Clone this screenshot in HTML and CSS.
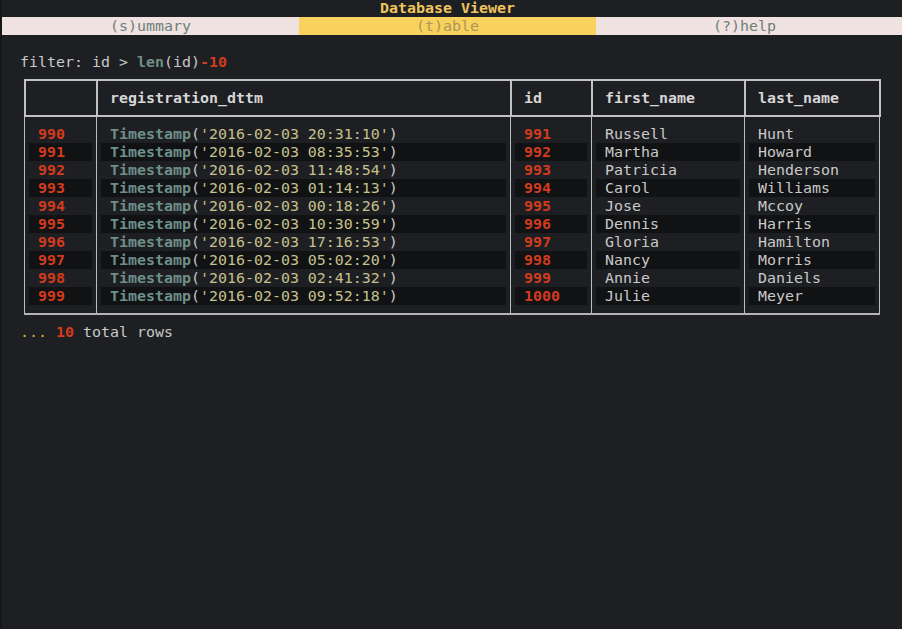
FILE: index.html
```html
<!DOCTYPE html>
<html lang="en">
<head>
<meta charset="utf-8">
<title>Database Viewer</title>
<link rel="stylesheet" href="styles.css">
</head>
<body>
<div class="screen">
  <div class="line title">Database Viewer</div>
  <div class="tabs">
    <div class="tab">(s)ummary</div>
    <div class="tab active">(t)able</div>
    <div class="tab help">(?)help</div>
  </div>
  <div class="line"></div>
  <div class="line filter">filter: id &gt; <b class="fn">len</b>(id)<b class="num">-10</b></div>

  <div class="table">
    <div class="thead">
      <div class="th idx"></div>
      <div class="th reg">registration_dttm</div>
      <div class="th id">id</div>
      <div class="th first">first_name</div>
      <div class="th last">last_name</div>
    </div>
    <div class="tbody">
      <div class="tr pad"><div class="td idx"></div><div class="td reg"></div><div class="td id"></div><div class="td first"></div><div class="td last"></div></div>
      <div class="tr"><div class="td idx num">990</div><div class="td reg"><b class="fn">Timestamp</b>(<span class="str">'2016-02-03 20:31:10'</span>)</div><div class="td id num">991</div><div class="td first">Russell</div><div class="td last">Hunt</div></div>
      <div class="tr alt"><div class="td idx num">991</div><div class="td reg"><b class="fn">Timestamp</b>(<span class="str">'2016-02-03 08:35:53'</span>)</div><div class="td id num">992</div><div class="td first">Martha</div><div class="td last">Howard</div></div>
      <div class="tr"><div class="td idx num">992</div><div class="td reg"><b class="fn">Timestamp</b>(<span class="str">'2016-02-03 11:48:54'</span>)</div><div class="td id num">993</div><div class="td first">Patricia</div><div class="td last">Henderson</div></div>
      <div class="tr alt"><div class="td idx num">993</div><div class="td reg"><b class="fn">Timestamp</b>(<span class="str">'2016-02-03 01:14:13'</span>)</div><div class="td id num">994</div><div class="td first">Carol</div><div class="td last">Williams</div></div>
      <div class="tr"><div class="td idx num">994</div><div class="td reg"><b class="fn">Timestamp</b>(<span class="str">'2016-02-03 00:18:26'</span>)</div><div class="td id num">995</div><div class="td first">Jose</div><div class="td last">Mccoy</div></div>
      <div class="tr alt"><div class="td idx num">995</div><div class="td reg"><b class="fn">Timestamp</b>(<span class="str">'2016-02-03 10:30:59'</span>)</div><div class="td id num">996</div><div class="td first">Dennis</div><div class="td last">Harris</div></div>
      <div class="tr"><div class="td idx num">996</div><div class="td reg"><b class="fn">Timestamp</b>(<span class="str">'2016-02-03 17:16:53'</span>)</div><div class="td id num">997</div><div class="td first">Gloria</div><div class="td last">Hamilton</div></div>
      <div class="tr alt"><div class="td idx num">997</div><div class="td reg"><b class="fn">Timestamp</b>(<span class="str">'2016-02-03 05:02:20'</span>)</div><div class="td id num">998</div><div class="td first">Nancy</div><div class="td last">Morris</div></div>
      <div class="tr"><div class="td idx num">998</div><div class="td reg"><b class="fn">Timestamp</b>(<span class="str">'2016-02-03 02:41:32'</span>)</div><div class="td id num">999</div><div class="td first">Annie</div><div class="td last">Daniels</div></div>
      <div class="tr alt"><div class="td idx num">999</div><div class="td reg"><b class="fn">Timestamp</b>(<span class="str">'2016-02-03 09:52:18'</span>)</div><div class="td id num">1000</div><div class="td first">Julie</div><div class="td last">Meyer</div></div>
      <div class="tr pad"><div class="td idx"></div><div class="td reg"></div><div class="td id"></div><div class="td first"></div><div class="td last"></div></div>
    </div>
  </div>

  <div class="line footer"><span class="dots">...</span> <b class="num">10</b> total rows</div>
</div>
</body>
</html>
```

FILE: styles.css
```css
html, body {
  margin: 0;
  padding: 0;
}

body {
  background: #1e1f22;
  border-left: 2px solid #161719;
  height: 629px;
  overflow: hidden;
  font-family: "DejaVu Sans Mono", monospace;
  font-size: 14.95px;
  line-height: 18px;
  color: #c9c9c9;
}

.screen {
  width: 900px;
  margin-top: -1px;
}

.line {
  height: 18px;
  white-space: pre;
}

.title {
  text-align: center;
  padding-right: 9px;
  font-weight: bold;
  color: #f0c45c;
}

.tabs {
  display: flex;
  height: 18px;
}

.tab {
  width: 297px;
  text-align: center;
  background: #f0e2e1;
  color: #6b8079;
}

.tab.active {
  background: #f9d15d;
  color: #a8975c;
}

.tab.help {
  width: 306px;
  padding-right: 9px;
  box-sizing: border-box;
}

.filter {
  padding-left: 18px;
}

.fn {
  color: #6e8f88;
  font-weight: bold;
}

.num {
  color: #d23b1d;
  font-weight: bold;
}

.str {
  color: #c6c18d;
}

/* table */
.table {
  margin-left: 22px;
  padding-top: 8px;
  width: 857px;
}

.thead {
  display: flex;
  border: 2px solid #c2c2c2;
  border-right: 0;
  height: 34px;
}

.th {
  border-right: 2px solid #c2c2c2;
  padding: 8px 0 0 12px;
  box-sizing: border-box;
  font-weight: bold;
  color: #d6d6d6;
  white-space: pre;
}

.th.idx { width: 72px; }
.th.reg { width: 414px; }
.th.id { width: 81px; }
.th.first { width: 153px; }
.th.last { width: 135px; }

.tbody {
  border-bottom: 2px solid #b4b4b4;
  width: 856px;
}

.tr {
  display: flex;
  height: 18px;
  border-left: 1px solid #bdbdbd;
}

.tr.pad {
  height: 8px;
}

.td {
  padding: 0 4px;
  border-right: 1px solid #bdbdbd;
  background-clip: content-box;
  text-indent: 9px;
  white-space: pre;
  overflow: hidden;
}

.tr.alt .td {
  background-color: #111214;
}

.td.idx { width: 63px; }
.td.reg { width: 405px; }
.td.id { width: 72px; }
.td.first { width: 144px; }
.td.last { width: 126px; }

.footer {
  margin-top: 8px;
  padding-left: 18px;
}

.dots {
  color: #dcae3a;
}
```
